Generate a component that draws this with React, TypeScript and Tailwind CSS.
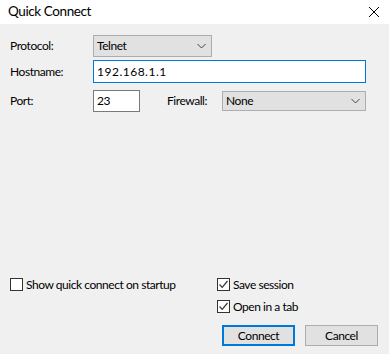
const font = { fontFamily: 'Lato, "Segoe UI", sans-serif' }

const Chevron = () => (
  <svg width="9" height="6" viewBox="0 0 9 6">
    <path d="M0.5 1 L4.5 5 L8.5 1" fill="none" stroke="#444" strokeWidth="1" />
  </svg>
)

const Combo = ({ value, width, height }: { value: string; width: string; height: string }) => (
  <div className={`${width} ${height} flex items-center justify-between bg-[#e1e1e1] border border-[#adadad] pl-[3px] pr-[5px]`}>
    <span>{value}</span>
    <Chevron />
  </div>
)

const Check = ({ checked, label }: { checked?: boolean; label: string }) => (
  <div className="flex items-center h-[13px] gap-[3px]">
    <div className="w-[13px] h-[13px] bg-white border border-[#333] flex items-center justify-center">
      {checked && (
        <svg width="11" height="11" viewBox="0 0 11 11">
          <path d="M1.5 5.5 L4.2 8.3 L9.5 2" fill="none" stroke="#333" strokeWidth="1.2" />
        </svg>
      )}
    </div>
    <span>{label}</span>
  </div>
)

export default function App() {
  return (
    <div className="w-[389px] h-[354px] bg-[#f0f0f0] flex flex-col text-[12px] tracking-[-0.45px] text-black leading-none" style={font}>
      {/* Title bar */}
      <div className="h-[24px] bg-white flex items-center justify-between pl-[8px] pr-[10px]">
        <span className="text-[13.5px] tracking-[-0.4px]">Quick Connect</span>
        <svg width="10" height="10" viewBox="0 0 10 10">
          <path d="M0 0 L10 10 M10 0 L0 10" stroke="#000" strokeWidth="1" />
        </svg>
      </div>

      {/* Form */}
      <div className="pl-[10px] pt-[11px] flex flex-col">
        <div className="flex items-center">
          <span className="w-[83px]">Protocol:</span>
          <Combo value="Telnet" width="w-[119px]" height="h-[22px]" />
        </div>
        <div className="flex items-center mt-[3px]">
          <span className="w-[83px]">Hostname:</span>
          <div className="w-[273px] h-[23px] bg-white border border-[#0078d7] flex items-center pl-[3px] tracking-[0.5px]">192.168.1.1</div>
        </div>
        <div className="flex items-center mt-[7px]">
          <span className="w-[83px]">Port:</span>
          <div className="w-[47px] h-[22px] bg-white border border-[#7a7a7a] flex items-center pl-[3px]">23</div>
          <span className="ml-[27px] w-[55px]">Firewall:</span>
          <Combo value="None" width="w-[144px]" height="h-[20px]" />
        </div>
      </div>

      {/* Options and buttons */}
      <div className="mt-auto pb-[8px] pl-[10px] flex">
        <div className="w-[207px]">
          <Check label="Show quick connect on startup" />
        </div>
        <div className="flex flex-col">
          <Check checked label="Save session" />
          <div className="mt-[9px]">
            <Check checked label="Open in a tab" />
          </div>
          <div className="flex gap-[10px] ml-[5px] mt-[12px]">
            <div className="w-[73px] h-[21px] bg-[#e1e1e1] border-2 border-[#0078d7] flex items-center justify-center">Connect</div>
            <div className="w-[73px] h-[21px] bg-[#e1e1e1] border border-[#adadad] flex items-center justify-center">Cancel</div>
          </div>
        </div>
      </div>
    </div>
  )
}
